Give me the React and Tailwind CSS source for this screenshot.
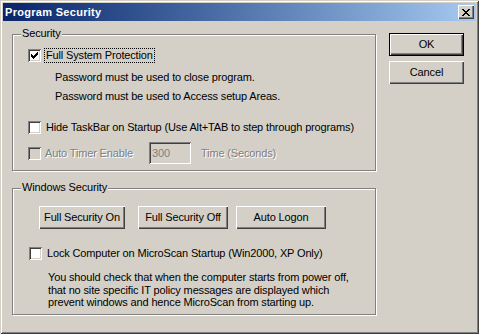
import React from 'react';

const raised = "shadow-[inset_1px_1px_#fff,inset_-1px_-1px_#404040,inset_-2px_-2px_#808080]";
const sunken = "shadow-[inset_1px_1px_#808080,inset_-1px_-1px_#fff,inset_2px_2px_#404040,inset_-2px_-2px_#d4d0c8]";
const etched = "border border-[#808080] shadow-[inset_1px_1px_#fff,1px_1px_#fff]";
const disabledText = "text-[#808080] [text-shadow:1px_1px_0_#fff]";

const CheckMark = () => (
    <svg width="7" height="7" viewBox="0 0 7 7" shapeRendering="crispEdges" className="absolute left-[3px] top-[3px]">
        <rect x="6" y="0" width="1" height="1" fill="#000" />
        <rect x="5" y="1" width="2" height="1" fill="#000" />
        <rect x="0" y="2" width="1" height="1" fill="#000" />
        <rect x="4" y="2" width="3" height="1" fill="#000" />
        <rect x="0" y="3" width="2" height="1" fill="#000" />
        <rect x="3" y="3" width="3" height="1" fill="#000" />
        <rect x="0" y="4" width="5" height="1" fill="#000" />
        <rect x="1" y="5" width="3" height="1" fill="#000" />
        <rect x="2" y="6" width="1" height="1" fill="#000" />
    </svg>
);

const CloseGlyph = () => (
    <svg width="8" height="7" viewBox="0 0 8 7" shapeRendering="crispEdges">
        <path d="M0 0h2v1H0zM6 0h2v1H6zM1 1h2v1H1zM5 1h2v1H5zM2 2h4v1H2zM3 3h2v1H3zM2 4h4v1H2zM1 5h2v1H1zM5 5h2v1H5zM0 6h2v1H0zM6 6h2v1H6z" fill="#000" />
    </svg>
);

const Checkbox = ({ checked, disabled }) => (
    <div className={`relative w-[13px] h-[13px] shrink-0 ${disabled ? 'bg-[#d4d0c8]' : 'bg-white'} ${sunken}`}>
        {checked && <CheckMark />}
    </div>
);

const Button = ({ children, className = '', isDefault }) => (
    <div className={`flex items-center justify-center h-[23px] bg-[#d4d0c8] ${isDefault ? 'border border-black' : ''} ${raised} ${className}`}>
        {children}
    </div>
);

const GroupBox = ({ label, className = '', children }) => (
    <div className={`relative w-[364px] ${etched} ${className}`}>
        <span className="absolute -top-[8px] left-[8px] px-[1px] bg-[#d4d0c8] leading-[13px]">{label}</span>
        {children}
    </div>
);

export default function App() {
    return (
        <div className="w-[479px] h-[334px] bg-[#d4d0c8] p-[3px] font-['Liberation_Sans',Arial,sans-serif] text-[11px] tracking-[-0.15px] text-black shadow-[inset_1px_1px_#d4d0c8,inset_-1px_-1px_#404040,inset_2px_2px_#fff,inset_-2px_-2px_#808080] overflow-hidden">
            {/* title bar */}
            <div className="h-[18px] flex items-center justify-between bg-linear-to-r from-[#0a246a] to-[#a6caf0]">
                <span className="pl-[2px] text-white font-bold tracking-[0.3px] leading-[18px]">Program Security</span>
                <div className={`w-[16px] h-[14px] mr-[2px] flex items-center justify-center bg-[#d4d0c8] ${raised}`}>
                    <CloseGlyph />
                </div>
            </div>

            <div className="flex pl-[9px]">
                <div>
                    <GroupBox label="Security" className="mt-[13px] h-[137px]">
                        <div className="mt-[14px] ml-[15px] h-[13px] flex items-center">
                            <Checkbox checked />
                            <span className="ml-[3px] px-[1px] border border-dotted border-black leading-[13px]">Full System Protection</span>
                        </div>
                        <div className="pl-[42px] leading-[13px]">
                            <div className="mt-[9px]">Password must be used to close program.</div>
                            <div className="mt-[6px]">Password must be used to Access setup Areas.</div>
                        </div>
                        <div className="mt-[18px] ml-[15px] h-[13px] flex items-center">
                            <Checkbox />
                            <span className="ml-[5px] leading-[13px]">Hide TaskBar on Startup (Use Alt+TAB to step through programs)</span>
                        </div>
                        <div className="mt-[8px] ml-[15px] h-[22px] flex items-center">
                            <Checkbox disabled />
                            <span className={`ml-[4px] w-[104px] ${disabledText}`}>Auto Timer Enable</span>
                            <div className={`w-[42px] h-[22px] pl-[3px] flex items-center text-[#808080] ${sunken} bg-[#d4d0c8]`}>300</div>
                            <span className={`ml-[10px] ${disabledText}`}>Time (Seconds)</span>
                        </div>
                    </GroupBox>

                    <GroupBox label="Windows Security" className="mt-[17px] h-[127px]">
                        <div className="mt-[17px] ml-[26px] flex">
                            <Button className="w-[86px]">Full Security On</Button>
                            <Button className="w-[90px] ml-[13px]">Full Security Off</Button>
                            <Button className="w-[90px] ml-[8px]">Auto Logon</Button>
                        </div>
                        <div className="mt-[18px] ml-[16px] h-[13px] flex items-center">
                            <Checkbox />
                            <span className="ml-[5px] leading-[13px]">Lock Computer on MicroScan Startup (Win2000, XP Only)</span>
                        </div>
                        <p className="mt-[11px] pl-[35px] leading-[12.5px]">
                            You should check that when the computer starts from power off,<br />
                            that no site specific IT policy messages are displayed which<br />
                            prevent windows and hence MicroScan from starting up.
                        </p>
                    </GroupBox>
                </div>

                <div className="ml-[13px] mt-[12px] flex flex-col">
                    <Button isDefault className="w-[75px]">OK</Button>
                    <Button className="w-[75px] mt-[5px]">Cancel</Button>
                </div>
            </div>
        </div>
    );
}
